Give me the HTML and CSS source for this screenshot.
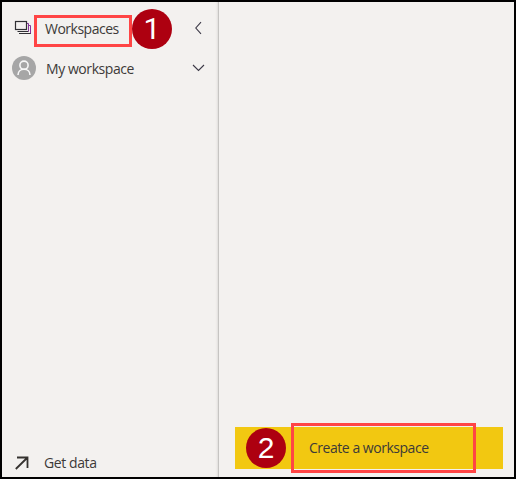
FILE: index.html
```html
<!DOCTYPE html>
<html lang="en">
<head>
<meta charset="utf-8">
<title>Workspaces</title>
<link rel="stylesheet" href="styles.css">
</head>
<body>
<div class="app">
  <nav class="sidebar">
    <div class="row row-workspaces">
      <svg class="stack" width="18" height="14" viewBox="0 0 18 14" fill="none" stroke-width="1">
        <path d="M4 12.500h12M2.500 10.500h11" stroke="#303034"/>
        <path d="M12 2.500h1.500v8M14 4.500h1.500v8" stroke="#85339a"/>
        <rect x=".5" y=".5" width="11" height="8" stroke="#303034" stroke-width="1.200"/>
      </svg>
      <span class="label label-workspaces">Workspaces</span>
      <svg class="chevron-left" width="7" height="14" viewBox="0 0 7 14"><path d="M6 1.200.800 7 6 12.800"/></svg>
      <div class="outline outline-one"></div>
      <div class="badge badge-one">1</div>
    </div>
    <div class="row row-my">
      <svg class="avatar" width="24" height="24" viewBox="0 0 24 24" fill="none" stroke="#f7f7f7" stroke-width="1.600">
        <circle cx="12" cy="12" r="12" fill="#a6a6a6" stroke="none"/>
        <circle cx="12" cy="9.200" r="4.100"/>
        <path d="M6 19c0-3.500 2.600-5.700 6-5.700s6 2.200 6 5.700"/>
      </svg>
      <span class="label label-my">My workspace</span>
      <svg class="chevron-down" width="13" height="8" viewBox="0 0 13 8"><path d="m1 1 5.500 5.500L12 1"/></svg>
    </div>
    <div class="row row-data">
      <svg class="arrow" width="14" height="14" viewBox="0 0 14 14"><path d="M2 1.500h10.500V12M12.500 1.500.8 13"/></svg>
      <span class="label label-data">Get data</span>
    </div>
  </nav>
  <main class="panel">
    <div class="create">
      <span class="label label-create">Create a workspace</span>
      <div class="outline outline-two"></div>
      <div class="badge badge-two">2</div>
    </div>
  </main>
</div>
</body>
</html>
```
FILE: styles.css
```css
* { box-sizing: border-box; }
body { margin: 0; background: #000; }
.app {
  display: flex;
  width: 516px;
  height: 479px;
  border: 2px solid #000;
  background: #f3f1ef;
  font: 14px/20px "Open Sans", "Noto Sans", sans-serif;
  color: #3d3a38;
}
.sidebar {
  display: flex;
  flex-direction: column;
  width: 217px;
  border-right: 1px solid #c6c4c2;
  box-shadow: inset -2px 0 2px -1px #dfdddb;
}
.row { position: relative; display: flex; align-items: center; }
.row svg { flex: none; }
.row-workspaces { height: 40px; margin-top: 6px; padding: 0 16px 0 13px; }
.row-my { height: 40px; padding: 0 13px 0 10px; }
.row-data { height: 28px; margin-top: auto; padding-left: 13px; }
.stack { overflow: visible; }
.label { white-space: nowrap; }
.label-workspaces { margin: 2px 0 0 12px; letter-spacing: -.5px; }
.label-my { margin: 2px 0 0 10px; letter-spacing: -.43px; }
.label-data { margin-left: 15px; letter-spacing: -.4px; }
.chevron-left, .chevron-down { margin-left: auto; fill: none; stroke: #3b3846; stroke-width: 1.1; }
.arrow { fill: none; stroke: #35322f; stroke-width: 1.8; }
.panel { flex: 1; display: flex; align-items: flex-end; padding: 0 11px 8px 16px; }
.create {
  position: relative;
  display: flex;
  align-items: center;
  width: 100%;
  height: 42px;
  padding-left: 74px;
  background: #f2c811;
}
.label-create { letter-spacing: -.47px; }
.outline { position: absolute; border: 3px solid #ff4545; }
.outline-one { left: 32px; top: 7px; width: 98px; height: 32px; }
.outline-two { left: 56px; top: -4px; width: 185px; height: 50px; }
.badge {
  position: absolute;
  width: 40px;
  height: 40px;
  border-radius: 50%;
  background: #ad0010;
  color: #fff;
  font: 30px/40px "Liberation Sans", Arial, sans-serif;
  text-align: center;
}
.badge-one { left: 130px; top: 1px; font-family: Roboto, "Liberation Sans", sans-serif; }
.badge-two { left: 11px; top: 1px; }
```
